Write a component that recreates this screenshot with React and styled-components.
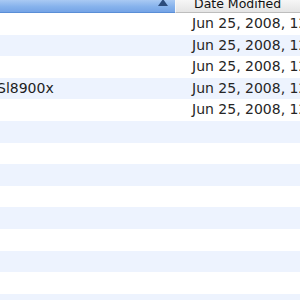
import styled, { createGlobalStyle } from "styled-components";

const Global = createGlobalStyle`
    html, body {
        margin: 0;
        padding: 0;
        background: #fff;
        overflow: hidden;
    }
    body {
        font-family: "DejaVu Sans", "Liberation Sans", sans-serif;
        color: #1e1e1e;
    }
`;

const Table = styled.div`
    width: 300px;
    height: 300px;
    overflow: hidden;
    display: flex;
    flex-direction: column;
`;

const Header = styled.div`
    display: grid;
    grid-template-columns: 175px 1fr;
    height: 13px;
    flex-shrink: 0;
`;

const HeaderCell = styled.div`
    display: flex;
    align-items: flex-start;
    justify-content: ${props => props.sorted ? "flex-end" : "flex-start"};
    padding: ${props => props.sorted ? "0 4px 0 0" : "0 0 0 18px"};
    box-sizing: border-box;
    overflow: hidden;
    font-size: 12.5px;
    line-height: 13px;
    color: #111;
    background: ${props => props.sorted
        ? "linear-gradient(#a9c9f3, #86b2ec 55%, #75a4e6 100%)"
        : "linear-gradient(#f6f6f6, #e4e4e4)"};
    border-bottom: 1px solid ${props => props.sorted ? "#5a8ed6" : "#bdbdbd"};
    border-left: ${props => props.sorted ? "none" : "1px solid #f8f8f8"};
`;

const HeaderLabel = styled.span`
    margin-top: -3px;
    white-space: nowrap;
`;

const SortArrow = styled.span`
    width: 0;
    height: 0;
    margin-right: 3px;
    margin-top: -1px;
    border-left: 5px solid transparent;
    border-right: 5px solid transparent;
    border-bottom: 7px solid #2c4c7c;
`;

const Row = styled.div`
    display: grid;
    grid-template-columns: 175px 1fr;
    height: 21.6px;
    flex-shrink: 0;
    line-height: 21.6px;
    font-size: 14px;
    background: ${props => props.odd ? "#edf3fe" : "#ffffff"};
`;

const NameCell = styled.div`
    overflow: hidden;
    white-space: nowrap;
    span {
        display: inline-block;
        margin-left: -3px;
    }
`;

const DateCell = styled.div`
    overflow: hidden;
    white-space: nowrap;
    padding-left: 17px;
    color: #262626;
`;

const rows = [
    { name: "", date: "Jun 25, 2008, 12:00 PM" },
    { name: "", date: "Jun 25, 2008, 12:00 PM" },
    { name: "", date: "Jun 25, 2008, 12:00 PM" },
    { name: "Sl8900x", date: "Jun 25, 2008, 12:00 PM" },
    { name: "", date: "Jun 25, 2008, 12:00 PM" },
    ...Array.from({ length: 9 }, () => ({ name: "", date: "" }))
];

const App = () => {
    return (
        <Table>
            <Global />
            <Header>
                <HeaderCell sorted>
                    <SortArrow />
                </HeaderCell>
                <HeaderCell>
                    <HeaderLabel>Date Modified</HeaderLabel>
                </HeaderCell>
            </Header>
            {
                rows.map((row, index) => (
                    <Row key={index} odd={index % 2 === 1}>
                        <NameCell>{row.name && <span>{row.name}</span>}</NameCell>
                        <DateCell>{row.date}</DateCell>
                    </Row>
                ))
            }
        </Table>
    );
};

export default App;
